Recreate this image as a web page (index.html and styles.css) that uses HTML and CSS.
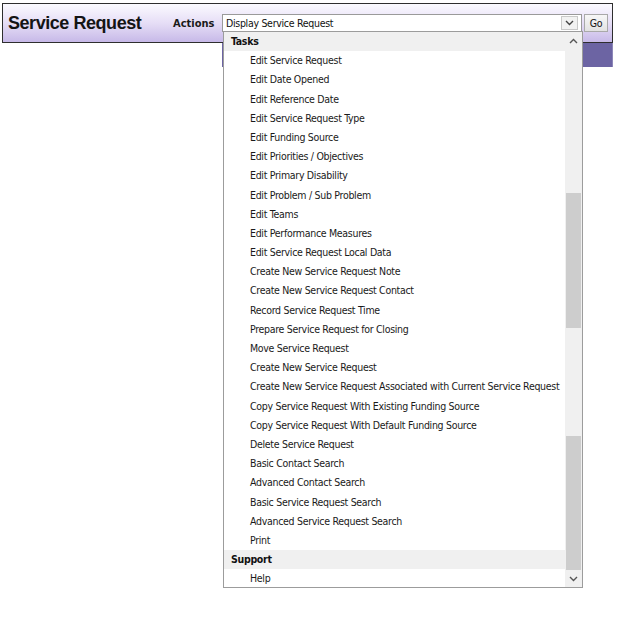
FILE: index.html
```html
<!DOCTYPE html>
<html>
<head>
<meta charset="utf-8">
<link rel="stylesheet" href="styles.css">
</head>
<body>
<div class="page">
  <header class="titlebar">
    <h1 class="title">Service Request</h1>
    <span class="actions-label">Actions</span>
    <div class="select">
      <span class="select-text">Display Service Request</span>
      <span class="select-arrow"><svg width="9" height="6" viewBox="0 0 9 6"><polyline points="1,1 4.5,4.5 8,1" fill="none" stroke="#444" stroke-width="1.4"/></svg></span>
    </div>
    <button class="go">Go</button>
  </header>
  <div class="subbar-row"><div class="subbar"></div></div>

  <div class="listbox">
    <ul class="options">
      <li class="group">Tasks</li>
      <li class="opt">Edit Service Request</li>
      <li class="opt">Edit Date Opened</li>
      <li class="opt">Edit Reference Date</li>
      <li class="opt">Edit Service Request Type</li>
      <li class="opt">Edit Funding Source</li>
      <li class="opt">Edit Priorities / Objectives</li>
      <li class="opt">Edit Primary Disability</li>
      <li class="opt">Edit Problem / Sub Problem</li>
      <li class="opt">Edit Teams</li>
      <li class="opt">Edit Performance Measures</li>
      <li class="opt">Edit Service Request Local Data</li>
      <li class="opt">Create New Service Request Note</li>
      <li class="opt">Create New Service Request Contact</li>
      <li class="opt">Record Service Request Time</li>
      <li class="opt">Prepare Service Request for Closing</li>
      <li class="opt">Move Service Request</li>
      <li class="opt">Create New Service Request</li>
      <li class="opt">Create New Service Request Associated with Current Service Request</li>
      <li class="opt">Copy Service Request With Existing Funding Source</li>
      <li class="opt">Copy Service Request With Default Funding Source</li>
      <li class="opt">Delete Service Request</li>
      <li class="opt">Basic Contact Search</li>
      <li class="opt">Advanced Contact Search</li>
      <li class="opt">Basic Service Request Search</li>
      <li class="opt">Advanced Service Request Search</li>
      <li class="opt">Print</li>
      <li class="group">Support</li>
      <li class="opt">Help</li>
    </ul>
    <div class="scrollbar">
      <span class="sb-btn"><svg width="9" height="6" viewBox="0 0 9 6"><polyline points="1,5 4.5,1.5 8,5" fill="none" stroke="#555" stroke-width="1.4"/></svg></span>
      <div class="sb-track">
        <div class="thumb thumb-a"></div>
        <div class="thumb thumb-b"></div>
      </div>
      <span class="sb-btn"><svg width="9" height="6" viewBox="0 0 9 6"><polyline points="1,1 4.5,4.5 8,1" fill="none" stroke="#555" stroke-width="1.4"/></svg></span>
    </div>
  </div>
</div>
</body>
</html>
```

FILE: styles.css
```css
html, body {
  margin: 0;
  padding: 0;
  background: #fff;
}
body {
  font-family: "DejaVu Sans Condensed", "DejaVu Sans", sans-serif;
  font-size: 10.5px;
  letter-spacing: -0.3px;
  color: #111;
}
.page {
  position: relative;
  width: 617px;
  height: 617px;
  padding-top: 3px;
  box-sizing: border-box;
}
.titlebar {
  margin-left: 2px;
  width: 609px;
  height: 38px;
  border: 1px solid #2e2e2e;
  background: linear-gradient(#fbfaff 0%, #e6def6 50%, #c7b9e8 100%);
  display: flex;
  align-items: center;
}
.title {
  margin: 0 0 0 5px;
  width: 165px;
  font-family: "Liberation Sans", Arial, sans-serif;
  font-weight: bold;
  font-size: 18px;
  letter-spacing: -0.45px;
  color: #141414;
  white-space: nowrap;
}
.actions-label {
  width: 49px;
  font-weight: bold;
  font-size: 11px;
  letter-spacing: 0;
  color: #1a1a1a;
}
.select {
  width: 360px;
  height: 18px;
  box-sizing: border-box;
  border: 1px solid #9a9a9a;
  background: #fff;
  display: flex;
  align-items: center;
  justify-content: space-between;
  padding: 0 3px 0 3px;
}
.select-text {
  color: #111;
}
.select-arrow {
  width: 17px;
  height: 14px;
  box-sizing: border-box;
  border: 1px solid #c9c9c9;
  background: #f2f2f2;
  display: flex;
  align-items: center;
  justify-content: center;
}
.go {
  margin-left: 2px;
  width: 24px;
  height: 18px;
  padding: 0;
  box-sizing: border-box;
  border: 1px solid #a9a9a9;
  background: linear-gradient(#f7f7f7, #e2e2e2);
  font-family: inherit;
  font-size: 10.5px;
  letter-spacing: -0.2px;
  color: #111;
}
.subbar-row {
  display: flex;
  justify-content: flex-end;
  width: 613px;
}
.subbar {
  width: 390px;
  height: 24px;
  background: #6c64a3;
  border-right: 1px solid #8c86b8;
}
.listbox {
  position: absolute;
  top: 31px;
  left: 223px;
  width: 360px;
  height: 557px;
  box-sizing: border-box;
  border: 1px solid #9c9c9c;
  background: #fff;
  display: flex;
}
.options {
  list-style: none;
  margin: 0;
  padding: 0;
  flex: 1;
  min-width: 0;
  overflow: hidden;
}
.options li {
  height: 19.2px;
  line-height: 19.2px;
  white-space: nowrap;
}
.group {
  font-weight: bold;
  padding-left: 7px;
  background: #f0f0f0;
  color: #111;
}
.opt {
  padding-left: 26px;
  color: #1a1a1a;
}
.scrollbar {
  width: 17px;
  flex: none;
  background: #f0f0f0;
  display: flex;
  flex-direction: column;
}
.sb-btn {
  height: 17px;
  display: flex;
  align-items: center;
  justify-content: center;
}
.sb-track {
  flex: 1;
  position: relative;
}
.thumb {
  position: absolute;
  left: 1px;
  width: 15px;
  background: #cdcdcd;
}
.thumb-a {
  top: 144px;
  height: 135px;
}
.thumb-b {
  top: 387px;
  height: 134px;
}
```
